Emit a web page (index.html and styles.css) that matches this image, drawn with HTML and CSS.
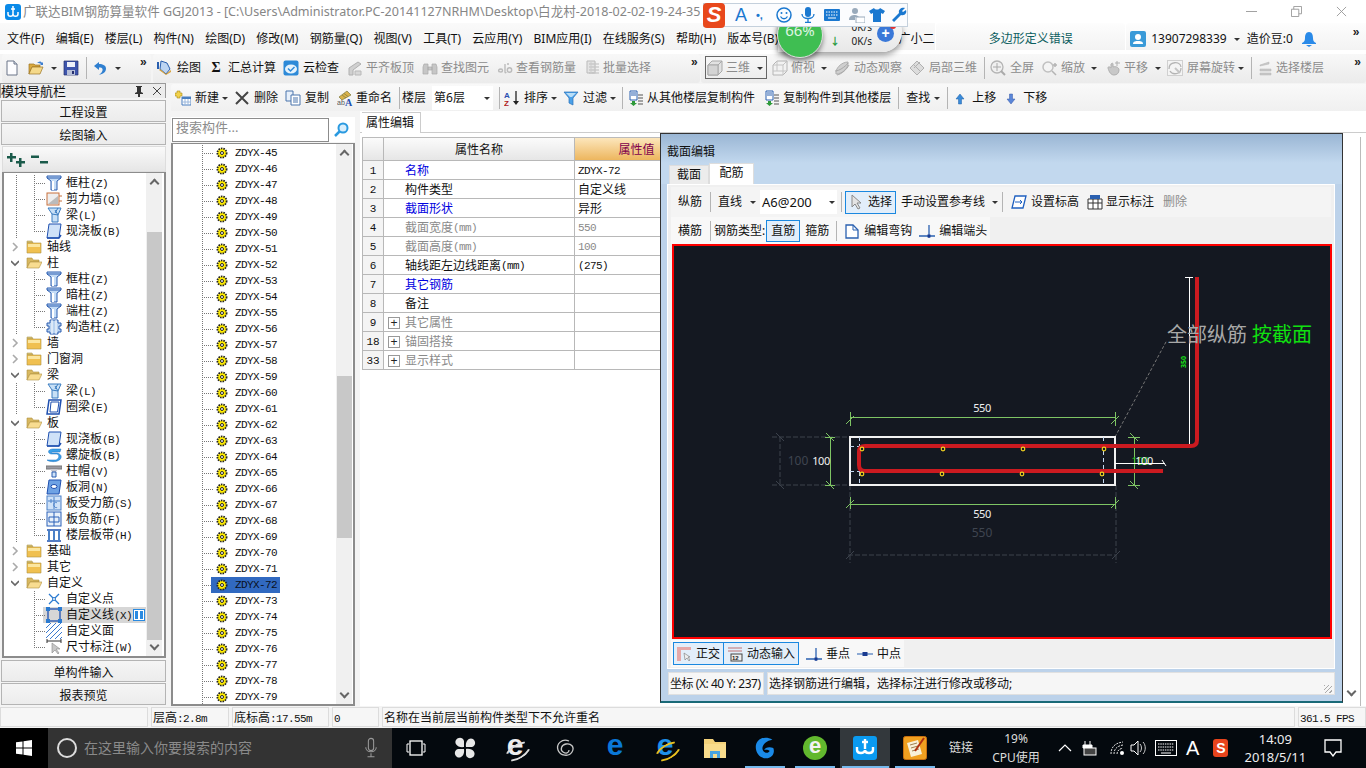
FILE: index.html
```html
<!DOCTYPE html>
<html lang="zh-CN">
<head>
<meta charset="utf-8">
<title>广联达BIM钢筋算量软件 GGJ2013</title>
<link rel="stylesheet" href="styles.css">
</head>
<body>
<svg class="sprite" aria-hidden="true">
<defs>
<symbol id="new" viewBox="0 0 16 16"><path d="M3 1h7l3 3v11H3z" fill="#fdfdff" stroke="#6a7488"/><path d="M10 1v3h3" fill="#d8dfea" stroke="#6a7488"/></symbol>
<symbol id="open" viewBox="0 0 16 16"><path d="M1 14V4h5l1 1h5v2H4l-3 7z" fill="#d9a93f" stroke="#9b7424" stroke-width=".7"/><path d="M1 14l3-7h11l-3 7z" fill="#f5d98a" stroke="#9b7424" stroke-width=".7"/><path d="M9 3c2-2 4-2 5 0l1-1v3h-3l1-1c-1-1-2-1-4-1z" fill="#3d7fd0"/></symbol>
<symbol id="save" viewBox="0 0 16 16"><path d="M1 1h14v14H1z" fill="#3e55ad" stroke="#26306e" stroke-width=".7"/><path d="M4 2h8v5H4z" fill="#eef1fa"/><path d="M4 10h8v5H4z" fill="#b8c0d8"/><path d="M9 11h2v3H9z" fill="#26306e"/></symbol>
<symbol id="undo" viewBox="0 0 16 16"><path d="M7 2 2 6l5 4V7.500c3-.5 4 1 3.500 3-.3 1.500-1.500 3-3.500 4 4 0 7-2.500 7-6 0-3-3-4.500-7-4.500z" fill="#2f7fd0"/></symbol>
<symbol id="draw" viewBox="0 0 16 16"><path d="M4 1l6 2 3 6-4 5-6-5z" fill="#bcd4f2" stroke="#2a5fae"/><path d="M3 9l6 5 5-4v2l-5 3-7-5z" fill="#d8a23c"/><path d="M1 2v7" stroke="#2a5fae" stroke-width="2"/></symbol>
<symbol id="cloud" viewBox="0 0 16 16"><rect x=".5" y=".5" width="15" height="15" rx="2" fill="#2d8ad8"/><ellipse cx="8" cy="9" rx="6" ry="4.500" fill="#e6f3fc"/><path d="M5 8.500l2.500 2.500 4-4" fill="none" stroke="#2d8ad8" stroke-width="1.500"/></symbol>
<symbol id="flush" viewBox="0 0 16 16"><path d="M2 8l9-6 3 2-8 6v5H2z" fill="#d0d0d0" stroke="#b0b0b0"/><path d="M8 11h6v4H8z" fill="#d8d8d8" stroke="#b8b8b8"/></symbol>
<symbol id="bino" viewBox="0 0 16 16"><path d="M2 4h4v10H1V7zM10 4h4l1 3v7h-5zM6 7h4v3H6z" fill="#c6c6c6" stroke="#aaa" stroke-width=".7"/></symbol>
<symbol id="rebar" viewBox="0 0 16 16"><path d="M2 12c-1-2 0-3 2-3s2 3 0 3-2-1-2 0zM8 4v8c0 1 1 1 1 0M12 4l-2 0" fill="none" stroke="#bbb" stroke-width="1.400"/><circle cx="12.500" cy="10" r="2.200" fill="none" stroke="#bbb" stroke-width="1.400"/></symbol>
<symbol id="batch" viewBox="0 0 16 16"><path d="M2 1h8v12H2z" fill="#e4e4e4" stroke="#bbb"/><path d="M4 4h10M4 7h10M4 10h10M4 13h10" stroke="#bbb"/><path d="M6 2v12M10 2v12" stroke="#ccc"/></symbol>
<symbol id="cube" viewBox="0 0 16 16"><path d="M1 5l4-4h10v10l-4 4H1z" fill="#e2e2e2" stroke="#a8a8a8"/><path d="M1 5h10v10M11 5l4-4" fill="none" stroke="#a8a8a8"/><path d="M1 5h10v10H1z" fill="#d4d4d4" stroke="#a8a8a8"/></symbol>
<symbol id="cube2" viewBox="0 0 16 16"><path d="M1 5l4-4h10v10l-4 4H1z" fill="#f2f2f2" stroke="#b4b4b4"/><path d="M1 5h10v10M11 5l4-4M5 1v10H1M5 11l10 0" fill="none" stroke="#c4c4c4"/></symbol>
<symbol id="orbit" viewBox="0 0 16 16"><path d="M2 14C1 9 7 2 14 2c1 5-5 12-12 12z" fill="#cfcfcf" stroke="#b0b0b0"/><path d="M1 11c4 0 10-4 13-8M3 15c5-1 10-6 12-10" fill="none" stroke="#a8a8a8"/></symbol>
<symbol id="local" viewBox="0 0 16 16"><path d="M1 8l7-7 7 7-7 7z" fill="#dcdcdc" stroke="#b0b0b0"/><path d="M4.500 4.500l7 7M8 1l7 7M1 8l7 7M8 5l3-3M5 8l3-3" stroke="#b0b0b0" fill="none"/></symbol>
<symbol id="zoomall" viewBox="0 0 16 16"><circle cx="7" cy="7" r="6" fill="#f0f0f0" stroke="#b4b4b4" stroke-width="1.300"/><path d="M7 3v8M3 7h8" stroke="#aaa"/><path d="M11 11l4 4" stroke="#aaa" stroke-width="2"/></symbol>
<symbol id="zoomin" viewBox="0 0 16 16"><circle cx="6" cy="7" r="5" fill="#f4f4f4" stroke="#c0c0c0" stroke-width="1.500"/><path d="M10 11l4 4M11 5h4M13 3v4" stroke="#b4b4b4" stroke-width="1.500"/></symbol>
<symbol id="pan" viewBox="0 0 16 16"><path d="M3 8c0-2 2-1 3 0V4c1-1 2-1 2 0v3c2-1 6 0 6 3 0 3-2 5-5 5-3 0-5-3-6-7z" fill="#c8c8c8" stroke="#b0b0b0"/><path d="M12 1v5M10 3h5" stroke="#b0b0b0"/></symbol>
<symbol id="rotate" viewBox="0 0 16 16"><rect x=".5" y=".5" width="15" height="15" fill="#f4f4f4" stroke="#d0d0d0"/><path d="M2 9c0-8 11-8 12-2M14 8c0 7-9 7-11 3" fill="none" stroke="#b4b4b4" stroke-width="1.300"/><path d="M8 8l5 5" stroke="#c4c4c4" stroke-width="2"/></symbol>
<symbol id="floors" viewBox="0 0 16 16"><path d="M2 5l9-3v2l-9 2zM2 9h11v2H2zM2 13h11v2H2z" fill="#c8c8c8" stroke="#b4b4b4" stroke-width=".5"/></symbol>
<symbol id="newitem" viewBox="0 0 16 16"><path d="M2 1h3v2h2v3H5v2H2V6H0V3h2z" fill="#f2d24c" stroke="#a88a1c" stroke-width=".6"/><path d="M7 7h9v8H7z" fill="#fff" stroke="#4a7fc0"/><path d="M7 7h9v2H7z" fill="#4a7fc0"/><path d="M10 9v6M13 9v6M7 12h9" stroke="#9cb8dc"/></symbol>
<symbol id="del" viewBox="0 0 16 16"><path d="M2 2l12 12M14 2 2 14" stroke="#444" stroke-width="2"/></symbol>
<symbol id="copy" viewBox="0 0 16 16"><path d="M1 1h7v10H1z" fill="#e8f0fa" stroke="#4a74ac"/><path d="M6 5h9v10H6z" fill="#fff" stroke="#4a74ac"/><path d="M8 8h5M8 10h5M8 12h5" stroke="#4a74ac"/></symbol>
<symbol id="rename" viewBox="0 0 16 16"><path d="M2 7l8-6 4 4-9 5z" fill="#d9b24c" stroke="#7e7a3c" stroke-width=".7"/><path d="M5 5l4 3M7 3.500l4 3" stroke="#7e7a3c" stroke-width=".7"/><text class="svgmini" x="0" y="15">ab</text><text class="svgA" x="8" y="15.500">A</text></symbol>
<symbol id="sort" viewBox="0 0 16 16"><text class="svgaz az1" x="0" y="7.500">A</text><text class="svgaz az2" x="0" y="15.500">Z</text><path d="M12 1v12" stroke="#222" stroke-width="1.300"/><path d="M9 11l3 4 3-4z" fill="#222"/></symbol>
<symbol id="funnel" viewBox="0 0 16 16"><path d="M1 2h14L10 8v7l-4-2V8z" fill="#4aa0e8" stroke="#2a70b8" stroke-width=".7"/><path d="M3 3h10L9 7H7z" fill="#b8def8"/></symbol>
<symbol id="cfrom" viewBox="0 0 16 16"><path d="M2 1h7v9H2z" fill="#fff" stroke="#2a60b0"/><path d="M3 3h5M3 5h5" stroke="#2a60b0"/><path d="M4 11h3v2h2l-3.500 3L2 13h2z" fill="#2e9a3a"/><path d="M10 5h5M10 8h5M10 11h5M10 14h5" stroke="#555" stroke-width="1.200"/></symbol>
<symbol id="up" viewBox="0 0 16 16"><path d="M8 4l4 5h-2.500v5h-3V9H4z" fill="#3a8ad8" stroke="#1f60a8" stroke-width=".5"/></symbol>
<symbol id="down" viewBox="0 0 16 16"><path d="M8 14l4-5H9.500V4h-3v5H4z" fill="#5a86d8" stroke="#3658a8" stroke-width=".5"/></symbol>
<symbol id="tcol" viewBox="0 0 16 16"><path d="M1 1h14v2l-4 3v9H5V6L1 3z" fill="#c4dcf6" stroke="#2a5cb0"/><path d="M1 3h14" stroke="#2a5cb0"/><path d="M7 6v9" stroke="#fff" stroke-width="2"/></symbol>
<symbol id="wall" viewBox="0 0 16 16"><rect x="1" y="2" width="12" height="12" fill="#eee" stroke="#c8703c"/><path d="M2 13l10-8v8z" fill="#bbb"/><path d="M13 5h3M13 10h3" stroke="#c8703c"/></symbol>
<symbol id="beam" viewBox="0 0 16 16"><path d="M2 1h13l-3 7v7H6V7z" fill="#c8e0f6" stroke="#3a7cc0"/><path d="M6 7l6 1M9 3l3 5M12 1l-3 5" stroke="#3a7cc0" fill="none"/></symbol>
<symbol id="slab" viewBox="0 0 16 16"><path d="M3 1h12l-2 14H1z" fill="#cfe2f8" stroke="#1f50b0"/><path d="M1 15h12l2-3" fill="none" stroke="#1f50b0" stroke-width="1.500"/></symbol>
<symbol id="ring" viewBox="0 0 16 16"><path d="M3 1h12l-2 14H1z" fill="#fff" stroke="#1f50b0" stroke-width="1.500"/><path d="M5 3h8l-1.500 10H4z" fill="#fff" stroke="#1f50b0"/></symbol>
<symbol id="cons" viewBox="0 0 16 16"><path d="M4 1h8v3h3v3h-2v3h2v3h-3v2H4v-2H1v-3h2V7H1V4h3z" fill="#b8d2f0" stroke="#2a5cb0"/><path d="M6 1v14M10 1v14" stroke="#fff"/></symbol>
<symbol id="spiral" viewBox="0 0 16 16"><path d="M15 2H7C2 2 1 6 5 7h6c3 1 2 5-1 6H1c2 2 12 3 14-2 1-3-2-5-5-5H6c-1 0-1-1 1-1h7z" fill="#3aa0e8" stroke="#2070c0" stroke-width=".5"/></symbol>
<symbol id="cap" viewBox="0 0 16 16"><path d="M0 3h16v3H0z" fill="#9a9aa2" stroke="#777"/><path d="M4 6h8l-2 3H6z" fill="#c8c8d0"/><path d="M6 9h4v5H6z" fill="#cfe2f8" stroke="#2a5cb0"/></symbol>
<symbol id="hole" viewBox="0 0 16 16"><path d="M3 1h12l-2 14H1z" fill="#6ea2e4" stroke="#1f50b0"/><ellipse cx="8" cy="7.500" rx="3" ry="2" fill="#fff" stroke="#1f50b0"/></symbol>
<symbol id="rebs" viewBox="0 0 16 16"><rect x="1" y="1" width="14" height="14" fill="#cfe2f8" stroke="#4a80c8"/><path d="M8 2v12M2 6h12M5 4v4M11 8c-2-2-4 1-3 3 1 2 3 2 3 1" fill="none" stroke="#4a80c8"/></symbol>
<symbol id="rebn" viewBox="0 0 16 16"><rect x="1" y="1" width="14" height="14" fill="#e8f0fa" stroke="#2a60b8"/><path d="M8 1v14M3 6h10v5H3z" fill="none" stroke="#2a60b8"/></symbol>
<symbol id="band" viewBox="0 0 16 16"><path d="M1 3h14M1 14h14" stroke="#1f50b0" stroke-width="1.500"/><path d="M3 3v11M8 3v11M13 3v11" stroke="#4a80c8" stroke-width="2"/></symbol>
<symbol id="pt" viewBox="0 0 16 16"><path d="M3 3l10 10M13 3 3 13" stroke="#2a7ad0" stroke-width="1.300"/><circle cx="8" cy="8" r="1.500" fill="#fff" stroke="#2a7ad0"/></symbol>
<symbol id="lrect" viewBox="0 0 16 16"><rect x="2" y="2" width="12" height="12" fill="none" stroke="#1f50b0" stroke-width="1.300"/><path d="M0 0h4v4H0zM12 0h4v4h-4zM0 12h4v4H0zM12 12h4v4h-4z" fill="#2a7ad0"/></symbol>
<symbol id="hatch" viewBox="0 0 16 16"><path d="M0 5 5 0M0 10 10 0M0 15 15 0M4 16 16 4M9 16l7-7M14 16l2-2" stroke="#3a7ad0"/></symbol>
<symbol id="dim" viewBox="0 0 16 16"><path d="M1 2h14M1 0v4M15 0v4" stroke="#333"/><path d="M6 4v10l3-3 3 4 1-1-3-4h4z" fill="#c8c8c8" stroke="#888" stroke-width=".6"/></symbol>
<symbol id="cols" viewBox="0 0 12 12"><rect x=".5" y=".5" width="11" height="11" fill="#fff" stroke="#2a8ae0"/><path d="M2 2h3v8H2zM7 2h3v8H7z" fill="#2a8ae0"/></symbol>
<symbol id="fclosed" viewBox="0 0 16 16"><path d="M1 4V2h5l1 2z" fill="#d8c070" stroke="#b09a58" stroke-width=".6"/><path d="M1 4h14v10H1z" fill="#f0c050" stroke="#b09040" stroke-width=".6"/><path d="M2 5h12v3H2z" fill="#fbe6a0"/></symbol>
<symbol id="fopen" viewBox="0 0 16 16"><path d="M1 13V3h5l1 2h6v2H4z" fill="#d8b860" stroke="#b09040" stroke-width=".6"/><path d="M1 13l3-6h12l-3 6z" fill="#f8dc90" stroke="#b09040" stroke-width=".6"/></symbol>
<symbol id="chr" viewBox="0 0 8 10"><path d="M2 1l4 4-4 4" fill="none" stroke="#aaa" stroke-width="1.600"/></symbol>
<symbol id="chd" viewBox="0 0 8 10"><path d="M0 3l4 4 4-4" fill="none" stroke="#666" stroke-width="1.600"/></symbol>
<symbol id="gear" viewBox="0 0 12 12"><circle cx="6" cy="6" r="4.600" fill="#ffec00" stroke="#222" stroke-width="1.800" stroke-dasharray="1.500 1"/><circle cx="6" cy="6" r="1.500" fill="#fff" stroke="#222"/></symbol>
<symbol id="plus2" viewBox="0 0 24 16"><path d="M3 1h2.500v3H9v2.500H5.500V10H3V6.500H0V4h3zM12 6h2.500v3H18v2.500h-3.500V15H12v-3.500H9V9h3z" fill="#1a5a4a"/></symbol>
<symbol id="minus2" viewBox="0 0 24 16"><path d="M0 3.500h8V6H0zM9 9h8v2.500H9z" fill="#1a5a4a"/></symbol>
<symbol id="user" viewBox="0 0 16 16"><rect width="16" height="16" rx="2" fill="#3a9ad8"/><circle cx="8" cy="6" r="3" fill="#fff"/><path d="M3 13c0-3 3-3 5-3s5 0 5 3z" fill="#fff"/></symbol>
<symbol id="bell" viewBox="0 0 16 16"><path d="M8 1c3 0 4 3 4 6s1 4 3 5v1H1v-1c2-1 3-2 3-5s1-6 4-6z" fill="#2a8ae8"/><path d="M5 14h6l-3 2z" fill="#2a8ae8"/></symbol>
<symbol id="cursor" viewBox="0 0 16 16"><path d="M4 1v12l3-3 3 5 2-1-3-5h4z" fill="#e4e4e4" stroke="#888"/></symbol>
<symbol id="elev" viewBox="0 0 16 16"><path d="M4 2h11l-3 12H1z" fill="#fff" stroke="#1f60c0" stroke-width="1.300"/><path d="M4 8h7M11 8l-2-2M11 8l-2 2" stroke="#1f60c0" fill="none"/></symbol>
<symbol id="showdim" viewBox="0 0 16 16"><path d="M1 5h14v10H1z" fill="#fff" stroke="#333"/><path d="M1 9h14M6 5v10M11 5v10" stroke="#333"/><path d="M3 1h10v4H3z" fill="#2a60b0"/></symbol>
<symbol id="hook" viewBox="0 0 16 16"><path d="M2 2h7l5 5v8H2z" fill="#fff" stroke="#2a60b0" stroke-width="1.300"/><path d="M9 2v5h5" fill="none" stroke="#2a60b0"/></symbol>
<symbol id="endp" viewBox="0 0 16 16"><path d="M0 13h16" stroke="#2a60b0" stroke-width="1.500"/><path d="M10 2v13" stroke="#2a60b0" stroke-width="1.300"/><rect x="8.500" y="11.500" width="3" height="3" fill="#1a3a90"/></symbol>
<symbol id="midp" viewBox="0 0 16 16"><path d="M0 8h16" stroke="#6a90c8" stroke-width="1.500"/><rect x="5.500" y="6" width="5" height="4" fill="#1a3a90"/></symbol>
<symbol id="ortho" viewBox="0 0 16 16"><path d="M1 1h14v3H5v11H1z" fill="#e6a8a8"/><path d="M8 7l1 7 2-2 2 3 1-1-2-3h2z" fill="#eee" stroke="#777" stroke-width=".6"/></symbol>
<symbol id="dyn" viewBox="0 0 16 16"><path d="M1 2h14M1 5h14" stroke="#c07070"/><rect x="4" y="8" width="11" height="7" fill="#eee" stroke="#444"/><text class="svgdyn" x="5" y="14">12</text></symbol>
<symbol id="search" viewBox="0 0 16 16"><circle cx="10" cy="6" r="4.500" fill="#d8eefc" stroke="#2a9ae0" stroke-width="2"/><path d="M6.500 9.500 2 14" stroke="#2a9ae0" stroke-width="2.500"/></symbol>
<symbol id="pin" viewBox="0 0 12 12"><path d="M3 1h6v1H8v5l2 1v1H7v3H5V9H2V8l2-1V2H3z" fill="#333"/></symbol>
<symbol id="close" viewBox="0 0 12 12"><path d="M2 2l8 8M10 2l-8 8" stroke="#444"/></symbol>
<symbol id="win" viewBox="0 0 16 16"><path d="M0 2.300 6.500 1.400V7.500H0zM7.500 1.300 16 0V7.500H7.500zM0 8.500H6.500V14.600L0 13.700zM7.500 8.500H16V16L7.500 14.700z" fill="#fff"/></symbol>
<symbol id="mic" viewBox="0 0 16 24"><rect x="5" y="1" width="6" height="14" rx="3" fill="none" stroke="#999" stroke-width="1.200"/><path d="M2 11c0 7 12 7 12 0M8 18v4M4 22h8" fill="none" stroke="#999" stroke-width="1.200"/></symbol>
<symbol id="tview" viewBox="0 0 20 16"><rect x="4" y="1" width="12" height="14" fill="none" stroke="#fff" stroke-width="1.300"/><path d="M3 4H1v8h2M17 4h2v8h-2" fill="none" stroke="#fff"/></symbol>
<symbol id="fan" viewBox="0 0 22 22"><path d="M10 10C3 11 0 6 2 3 4 0 9 0 10 4zM12 10c-1-7 4-10 7-8 3 2 3 7-1 8zM12 12c7-1 10 4 8 7-2 3-7 3-8-1zM10 12c1 7-4 10-7 8-3-2-3-7 1-8z" fill="#e8e8e8"/></symbol>
<symbol id="gspiral" viewBox="0 0 20 20"><path d="M14 3C7 0 1 6 3 12s11 7 14 2-1-9-6-8-6 6-3 8 6 1 6-2" fill="none" stroke="#c8c8c8" stroke-width="1.300"/></symbol>
<symbol id="folder2" viewBox="0 0 24 24"><path d="M1 3h9l2 3h11v16H1z" fill="#f4d27a"/><path d="M1 8h22v14H1z" fill="#f9dc8c"/><path d="M7 15h10v7H7z" fill="#4aa4e0"/><path d="M10 18h4v4h-4z" fill="#f9dc8c"/></symbol>
<symbol id="gapp" viewBox="0 0 24 26"><path d="M20 4C12-1 2 3 2 12c0 8 6 13 13 12 5-1 8-6 6-11-5-2-9 0-10 2 2 0 5 0 6 1-1 3-5 3-7 0-3-5 3-11 10-12z" fill="#1a8ae8"/></symbol>
<symbol id="appblue" viewBox="0 0 24 24"><rect width="24" height="24" rx="3" fill="#0a9af0"/><path d="M12 3v10M4 11v3c0 4 8 4 8 0 0 4 8 4 8 0v-3" fill="none" stroke="#fff" stroke-width="2.400"/><path d="M9 6h6" stroke="#fff" stroke-width="2.400"/></symbol>
<symbol id="note" viewBox="0 0 24 24"><rect x=".5" y=".5" width="23" height="23" rx="2" fill="#f0a020" stroke="#c87010"/><path d="M4 7l11-3 4 14-11 3z" fill="#f8f0d8"/><path d="M7 9l7-2M8 12l7-2M9 15l7-2" stroke="#a08050"/><path d="M21 2 12 15" stroke="#b03010" stroke-width="2"/></symbol>
<symbol id="caret" viewBox="0 0 14 8"><path d="M1 7l6-6 6 6" fill="none" stroke="#fff" stroke-width="1.200"/></symbol>
<symbol id="batt" viewBox="0 0 16 16"><path d="M4 1v4M9 1v4M2 5h9v3H2z" stroke="#fff" fill="#fff"/><rect x="3" y="8" width="12" height="7" fill="#444" stroke="#fff"/></symbol>
<symbol id="wifi" viewBox="0 0 16 16"><path d="M2 14c0-7 4-11 12-12M5 14c0-5 3-8 9-9M8 14c0-3 2-5 6-6" fill="none" stroke="#ddd" stroke-dasharray="2 1"/><circle cx="13" cy="13" r="2" fill="#fff"/></symbol>
<symbol id="spk" viewBox="0 0 16 16"><path d="M1 5h3l4-4v14l-4-4H1z" fill="none" stroke="#fff"/><path d="M10 4c2 2 2 6 0 8M13 2c3 3 3 9 0 12" fill="none" stroke="#ccc"/></symbol>
<symbol id="kbd" viewBox="0 0 22 16"><rect x=".5" y=".5" width="21" height="15" fill="none" stroke="#fff"/><path d="M3 4h16M3 7h16M3 10h16" stroke="#fff" stroke-dasharray="1.500 .8"/><path d="M6 13h10" stroke="#fff"/></symbol>
<symbol id="notif" viewBox="0 0 18 18"><path d="M1 1h16v12h-5l-3 4-3-4H1z" fill="none" stroke="#fff" stroke-width="1.300"/></symbol>
<symbol id="smile" viewBox="0 0 16 16"><circle cx="8" cy="8" r="7" fill="none" stroke="#1a78d0" stroke-width="1.500"/><circle cx="5.500" cy="6" r="1" fill="#1a78d0"/><circle cx="10.500" cy="6" r="1" fill="#1a78d0"/><path d="M4.500 9.500c2 3 5 3 7 0" fill="none" stroke="#1a78d0" stroke-width="1.300"/></symbol>
<symbol id="imic" viewBox="0 0 14 16"><rect x="4" y="0" width="6" height="10" rx="3" fill="#1a78d0"/><path d="M1 7c0 6 12 6 12 0M7 12v3M4 15.500h6" fill="none" stroke="#1a78d0" stroke-width="1.300"/></symbol>
<symbol id="ikb" viewBox="0 0 16 12"><rect width="16" height="12" rx="1" fill="#1a78d0"/><path d="M2 3h12M2 6h12" stroke="#fff" stroke-dasharray="1.500 1"/><path d="M4 9h8" stroke="#fff"/></symbol>
<symbol id="iperson" viewBox="0 0 16 16"><circle cx="6" cy="4" r="3" fill="#9ab"/><path d="M0 13c0-4 3-5 6-5 2 0 3 1 4 2H6v3z" fill="#9ab"/><rect x="7" y="10" width="9" height="6" fill="#fff" stroke="#9ab"/></symbol>
<symbol id="shirt" viewBox="0 0 16 16"><path d="M5 1 0 4l2 3 2-1v9h8V6l2 1 2-3-5-3c-1 2-5 2-6 0z" fill="#1a78d0"/></symbol>
<symbol id="wrench" viewBox="0 0 16 16"><path d="M14 1l-3 3 1 1 3-2c1 3-1 6-5 5l-7 7-2-2 7-7c-1-4 3-6 6-5z" fill="#1a78d0"/></symbol>
<symbol id="logo" viewBox="0 0 16 16"><rect width="16" height="16" rx="3" fill="#0a8ae8"/><path d="M8 2v8M3 8v2c0 3 5 3 5 0 0 3 5 3 5 0V8M6 5h4" fill="none" stroke="#fff" stroke-width="1.500"/></symbol>
</defs>
</svg>

<header class="title">
  <svg class="ic logo"><use href="#logo"/></svg>
  <span class="title-text">广联达BIM钢筋算量软件 GGJ2013 - [C:\Users\Administrator.PC-20141127NRHM\Desktop\白龙村-2018-02-02-19-24-35</span>
  <div class="winbtns">
    <svg class="wb" viewBox="0 0 12 12"><path d="M0 6h12" stroke="#999"/></svg>
    <svg class="wb" viewBox="0 0 12 12"><path d="M.5 3.500h8v8h-8zM3 3.500V.5h8.500v8H8.500" fill="none" stroke="#999"/></svg>
    <svg class="wb" viewBox="0 0 12 12"><path d="M1 1l10 10M11 1 1 11" stroke="#999"/></svg>
  </div>
</header>

<nav class="menubar">
  <div class="menu-main">
    <span>文件(F)</span><span>编辑(E)</span><span>楼层(L)</span><span>构件(N)</span><span>绘图(D)</span><span>修改(M)</span><span>钢筋量(Q)</span><span>视图(V)</span><span>工具(T)</span><span>云应用(Y)</span><span>BIM应用(I)</span><span>在线服务(S)</span><span>帮助(H)</span><span>版本号(B)</span><span class="xiaoer">广小二</span>
  </div>
  <div class="menu-err">多边形定义错误</div>
  <div class="menu-user tb">
    <svg class="ic"><use href="#user"/></svg>
    <span class="m5 phone">13907298339</span>
    <i class="dd m7"></i>
    <span class="m8">造价豆:0</span>
    <svg class="ic m8"><use href="#bell"/></svg>
    <b class="more m36">»</b>
  </div>
</nav>

<div class="toolbar1">
  <div class="seg seg1 tb">
    <svg class="ic m2"><use href="#new"/></svg>
    <svg class="ic m8"><use href="#open"/></svg>
    <i class="dd m7"></i>
    <svg class="ic m7"><use href="#save"/></svg>
    <i class="sp m7"></i>
    <svg class="ic m5"><use href="#undo"/></svg>
    <i class="dd m7"></i>
    <b class="more m20">»</b>
  </div>
  <div class="seg seg2 tb">
    <svg class="ic m4"><use href="#draw"/></svg><span class="m4">绘图</span>
    <b class="sigma m7">Σ</b><span class="m4">汇总计算</span>
    <svg class="ic m7"><use href="#cloud"/></svg><span class="m4">云检查</span>
    <svg class="ic m8"><use href="#flush"/></svg><span class="m3 off">平齐板顶</span>
    <svg class="ic m8"><use href="#bino"/></svg><span class="m3 off">查找图元</span>
    <svg class="ic m8"><use href="#rebar"/></svg><span class="m3 off">查看钢筋量</span>
    <svg class="ic m9"><use href="#batch"/></svg><span class="m2 off">批量选择</span>
    <b class="more m40">»</b>
  </div>
  <div class="seg seg3 tb">
    <div class="box3d m4 tb"><svg class="ic m2"><use href="#cube"/></svg><span class="m3 off">三维</span><i class="dd m7"></i></div>
    <svg class="ic m5"><use href="#cube2"/></svg><span class="m3 off">俯视</span><i class="dd m6"></i>
    <svg class="ic m8"><use href="#orbit"/></svg><span class="m4 off">动态观察</span>
    <svg class="ic m7"><use href="#local"/></svg><span class="m4 off">局部三维</span>
    <i class="sp m7"></i>
    <svg class="ic m5"><use href="#zoomall"/></svg><span class="m4 off">全屏</span>
    <svg class="ic m8"><use href="#zoomin"/></svg><span class="m3 off">缩放</span><i class="dd m6"></i>
    <svg class="ic m9"><use href="#pan"/></svg><span class="m3 off">平移</span><i class="dd m7"></i>
    <svg class="ic m7"><use href="#rotate"/></svg><span class="m4 off">屏幕旋转</span><i class="dd m3"></i>
    <i class="sp m8"></i>
    <svg class="ic m6"><use href="#floors"/></svg><span class="m2 off">选择楼层</span>
    <b class="more m30">»</b>
  </div>
</div>

<main class="main">
  <aside class="left">
    <div class="nav-head"><span>模块导航栏</span><svg class="nav-ic pinic"><use href="#pin"/></svg><svg class="nav-ic m6"><use href="#close"/></svg></div>
    <div class="lbtn lbtn1">工程设置</div>
    <div class="lbtn">绘图输入</div>
    <div class="expand"><svg class="expic"><use href="#plus2"/></svg><svg class="expic"><use href="#minus2"/></svg></div>
    <div class="ltree">
      <div class="lrows">
        <div class="row ch rl"><svg class="ic tic"><use href="#tcol"/></svg><span class="m4">框柱<span class="m">(Z)</span></span></div>
        <div class="row ch rl"><svg class="ic tic"><use href="#wall"/></svg><span class="m4">剪力墙<span class="m">(Q)</span></span></div>
        <div class="row ch rl"><svg class="ic tic"><use href="#beam"/></svg><span class="m4">梁<span class="m">(L)</span></span></div>
        <div class="row ch rl last"><svg class="ic tic"><use href="#slab"/></svg><span class="m4">现浇板<span class="m">(B)</span></span></div>
        <div class="row gr"><svg class="chev"><use href="#chr"/></svg><svg class="ic m7"><use href="#fclosed"/></svg><span class="m5">轴线</span></div>
        <div class="row gr"><svg class="chev"><use href="#chd"/></svg><svg class="ic m7"><use href="#fopen"/></svg><span class="m5">柱</span></div>
        <div class="row ch rl"><svg class="ic tic"><use href="#tcol"/></svg><span class="m4">框柱<span class="m">(Z)</span></span></div>
        <div class="row ch rl"><svg class="ic tic"><use href="#tcol"/></svg><span class="m4">暗柱<span class="m">(Z)</span></span></div>
        <div class="row ch rl"><svg class="ic tic"><use href="#tcol"/></svg><span class="m4">端柱<span class="m">(Z)</span></span></div>
        <div class="row ch rl last"><svg class="ic tic"><use href="#cons"/></svg><span class="m4">构造柱<span class="m">(Z)</span></span></div>
        <div class="row gr"><svg class="chev"><use href="#chr"/></svg><svg class="ic m7"><use href="#fclosed"/></svg><span class="m5">墙</span></div>
        <div class="row gr"><svg class="chev"><use href="#chr"/></svg><svg class="ic m7"><use href="#fclosed"/></svg><span class="m5">门窗洞</span></div>
        <div class="row gr"><svg class="chev"><use href="#chd"/></svg><svg class="ic m7"><use href="#fopen"/></svg><span class="m5">梁</span></div>
        <div class="row ch rl"><svg class="ic tic"><use href="#beam"/></svg><span class="m4">梁<span class="m">(L)</span></span></div>
        <div class="row ch rl last"><svg class="ic tic"><use href="#ring"/></svg><span class="m4">圈梁<span class="m">(E)</span></span></div>
        <div class="row gr"><svg class="chev"><use href="#chd"/></svg><svg class="ic m7"><use href="#fopen"/></svg><span class="m5">板</span></div>
        <div class="row ch rl"><svg class="ic tic"><use href="#slab"/></svg><span class="m4">现浇板<span class="m">(B)</span></span></div>
        <div class="row ch rl"><svg class="ic tic"><use href="#spiral"/></svg><span class="m4">螺旋板<span class="m">(B)</span></span></div>
        <div class="row ch rl"><svg class="ic tic"><use href="#cap"/></svg><span class="m4">柱帽<span class="m">(V)</span></span></div>
        <div class="row ch rl"><svg class="ic tic"><use href="#hole"/></svg><span class="m4">板洞<span class="m">(N)</span></span></div>
        <div class="row ch rl"><svg class="ic tic"><use href="#rebs"/></svg><span class="m4">板受力筋<span class="m">(S)</span></span></div>
        <div class="row ch rl"><svg class="ic tic"><use href="#rebn"/></svg><span class="m4">板负筋<span class="m">(F)</span></span></div>
        <div class="row ch rl last"><svg class="ic tic"><use href="#band"/></svg><span class="m4">楼层板带<span class="m">(H)</span></span></div>
        <div class="row gr"><svg class="chev"><use href="#chr"/></svg><svg class="ic m7"><use href="#fclosed"/></svg><span class="m5">基础</span></div>
        <div class="row gr"><svg class="chev"><use href="#chr"/></svg><svg class="ic m7"><use href="#fclosed"/></svg><span class="m5">其它</span></div>
        <div class="row gr"><svg class="chev"><use href="#chd"/></svg><svg class="ic m7"><use href="#fopen"/></svg><span class="m5">自定义</span></div>
        <div class="row ch"><svg class="ic tic"><use href="#pt"/></svg><span class="m4">自定义点</span></div>
        <div class="row ch selrow"><svg class="ic tic"><use href="#lrect"/></svg><span class="m4">自定义线<span class="m">(X)</span></span><svg class="colic"><use href="#cols"/></svg></div>
        <div class="row ch"><svg class="ic tic"><use href="#hatch"/></svg><span class="m4">自定义面</span></div>
        <div class="row ch last"><svg class="ic tic"><use href="#dim"/></svg><span class="m4">尺寸标注<span class="m">(W)</span></span></div>
      </div>
      <div class="sbar sbar-l"><i class="up-ch"></i><i class="thumb-l"></i><i class="dn-ch"></i></div>
    </div>
    <div class="lbtn lbtn3">单构件输入</div>
    <div class="lbtn">报表预览</div>
  </aside>

  <section class="work">
    <div class="toolbar3 tb">
      <svg class="ic m4"><use href="#newitem"/></svg><span class="m4">新建</span><i class="dd m3"></i>
      <svg class="ic m7"><use href="#del"/></svg><span class="m4">删除</span>
      <svg class="ic m7"><use href="#copy"/></svg><span class="m4">复制</span>
      <svg class="ic m8"><use href="#rename"/></svg><span class="m3">重命名</span>
      <i class="sp m7"></i><span class="m2">楼层</span>
      <div class="combo m6"><span>第6层</span><i class="dd"></i></div>
      <i class="sp m6"></i>
      <svg class="ic m4"><use href="#sort"/></svg><span class="m4">排序</span><i class="dd m3"></i>
      <svg class="ic m7"><use href="#funnel"/></svg><span class="m4">过滤</span><i class="dd m3"></i>
      <i class="sp m7"></i>
      <svg class="ic m5"><use href="#cfrom"/></svg><span class="m3">从其他楼层复制构件</span>
      <svg class="ic m9"><use href="#cfrom"/></svg><span class="m3">复制构件到其他楼层</span>
      <i class="sp m7"></i><span class="m7">查找</span><i class="dd m4"></i>
      <i class="sp m8"></i>
      <svg class="ic m4"><use href="#up"/></svg><span class="m4">上移</span>
      <svg class="ic m7"><use href="#down"/></svg><span class="m4">下移</span>
    </div>
    <div class="work-body">
      <div class="mid">
        <div class="searchrow"><div class="searchbox">搜索构件...</div><svg class="ic m4 sic"><use href="#search"/></svg></div>
        <div class="rtree">
          <div class="rrows">
            <div class="r2"><span class="lab"><svg class="gear"><use href="#gear"/></svg>ZDYX-45</span></div>
            <div class="r2"><span class="lab"><svg class="gear"><use href="#gear"/></svg>ZDYX-46</span></div>
            <div class="r2"><span class="lab"><svg class="gear"><use href="#gear"/></svg>ZDYX-47</span></div>
            <div class="r2"><span class="lab"><svg class="gear"><use href="#gear"/></svg>ZDYX-48</span></div>
            <div class="r2"><span class="lab"><svg class="gear"><use href="#gear"/></svg>ZDYX-49</span></div>
            <div class="r2"><span class="lab"><svg class="gear"><use href="#gear"/></svg>ZDYX-50</span></div>
            <div class="r2"><span class="lab"><svg class="gear"><use href="#gear"/></svg>ZDYX-51</span></div>
            <div class="r2"><span class="lab"><svg class="gear"><use href="#gear"/></svg>ZDYX-52</span></div>
            <div class="r2"><span class="lab"><svg class="gear"><use href="#gear"/></svg>ZDYX-53</span></div>
            <div class="r2"><span class="lab"><svg class="gear"><use href="#gear"/></svg>ZDYX-54</span></div>
            <div class="r2"><span class="lab"><svg class="gear"><use href="#gear"/></svg>ZDYX-55</span></div>
            <div class="r2"><span class="lab"><svg class="gear"><use href="#gear"/></svg>ZDYX-56</span></div>
            <div class="r2"><span class="lab"><svg class="gear"><use href="#gear"/></svg>ZDYX-57</span></div>
            <div class="r2"><span class="lab"><svg class="gear"><use href="#gear"/></svg>ZDYX-58</span></div>
            <div class="r2"><span class="lab"><svg class="gear"><use href="#gear"/></svg>ZDYX-59</span></div>
            <div class="r2"><span class="lab"><svg class="gear"><use href="#gear"/></svg>ZDYX-60</span></div>
            <div class="r2"><span class="lab"><svg class="gear"><use href="#gear"/></svg>ZDYX-61</span></div>
            <div class="r2"><span class="lab"><svg class="gear"><use href="#gear"/></svg>ZDYX-62</span></div>
            <div class="r2"><span class="lab"><svg class="gear"><use href="#gear"/></svg>ZDYX-63</span></div>
            <div class="r2"><span class="lab"><svg class="gear"><use href="#gear"/></svg>ZDYX-64</span></div>
            <div class="r2"><span class="lab"><svg class="gear"><use href="#gear"/></svg>ZDYX-65</span></div>
            <div class="r2"><span class="lab"><svg class="gear"><use href="#gear"/></svg>ZDYX-66</span></div>
            <div class="r2"><span class="lab"><svg class="gear"><use href="#gear"/></svg>ZDYX-67</span></div>
            <div class="r2"><span class="lab"><svg class="gear"><use href="#gear"/></svg>ZDYX-68</span></div>
            <div class="r2"><span class="lab"><svg class="gear"><use href="#gear"/></svg>ZDYX-69</span></div>
            <div class="r2"><span class="lab"><svg class="gear"><use href="#gear"/></svg>ZDYX-70</span></div>
            <div class="r2"><span class="lab"><svg class="gear"><use href="#gear"/></svg>ZDYX-71</span></div>
            <div class="r2"><span class="lab picked"><svg class="gear"><use href="#gear"/></svg>ZDYX-72</span></div>
            <div class="r2"><span class="lab"><svg class="gear"><use href="#gear"/></svg>ZDYX-73</span></div>
            <div class="r2"><span class="lab"><svg class="gear"><use href="#gear"/></svg>ZDYX-74</span></div>
            <div class="r2"><span class="lab"><svg class="gear"><use href="#gear"/></svg>ZDYX-75</span></div>
            <div class="r2"><span class="lab"><svg class="gear"><use href="#gear"/></svg>ZDYX-76</span></div>
            <div class="r2"><span class="lab"><svg class="gear"><use href="#gear"/></svg>ZDYX-77</span></div>
            <div class="r2"><span class="lab"><svg class="gear"><use href="#gear"/></svg>ZDYX-78</span></div>
            <div class="r2"><span class="lab"><svg class="gear"><use href="#gear"/></svg>ZDYX-79</span></div>
          </div>
          <div class="sbar sbar-r"><i class="up-ch"></i><i class="thumb-r"></i><i class="dn-ch"></i></div>
        </div>
      </div>
      <div class="right">
        <div class="tabrow"><div class="tab-attr">属性编辑</div></div>
        <div class="right-body">
          <div class="grid">
            <div class="c-no hd"></div><div class="c-name hd hn">属性名称</div><div class="c-val hd hv">属性值</div>
            <div class="c-no">1</div><div class="c-name blue">名称</div><div class="c-val mono">ZDYX-72</div>
            <div class="c-no">2</div><div class="c-name">构件类型</div><div class="c-val">自定义线</div>
            <div class="c-no">3</div><div class="c-name blue">截面形状</div><div class="c-val">异形</div>
            <div class="c-no">4</div><div class="c-name gray">截面宽度<span class="m">(mm)</span></div><div class="c-val mono gray">550</div>
            <div class="c-no">5</div><div class="c-name gray">截面高度<span class="m">(mm)</span></div><div class="c-val mono gray">100</div>
            <div class="c-no">6</div><div class="c-name">轴线距左边线距离<span class="m">(mm)</span></div><div class="c-val mono">(275)</div>
            <div class="c-no">7</div><div class="c-name blue">其它钢筋</div><div class="c-val"></div>
            <div class="c-no">8</div><div class="c-name">备注</div><div class="c-val"></div>
            <div class="c-no">9</div><div class="c-name gray grp"><i class="plus">+</i>其它属性</div><div class="c-val"></div>
            <div class="c-no">18</div><div class="c-name gray grp"><i class="plus">+</i>锚固搭接</div><div class="c-val"></div>
            <div class="c-no">33</div><div class="c-name gray grp"><i class="plus">+</i>显示样式</div><div class="c-val"></div>
          </div>
          <div class="rscroll"><i class="dn-ch"></i></div>
        </div>
      </div>
    </div>
  </section>
</main>

<footer class="status">
  <div class="st st0"></div>
  <div class="st st1">层高<span class="m">:2.8m</span></div>
  <div class="st st2">底标高<span class="m">:17.55m</span></div>
  <div class="st st3"><span class="m">0</span></div>
  <div class="st st4">名称在当前层当前构件类型下不允许重名</div>
  <div class="st st5"><span class="m">361.5 FPS</span></div>
</footer>

<div class="taskbar">
  <div class="start"><svg class="win"><use href="#win"/></svg></div>
  <div class="tsearch"><i class="ring"></i><span>在这里输入你要搜索的内容</span><svg class="tmic"><use href="#mic"/></svg></div>
  <div class="ti ti0"><svg class="tv"><use href="#tview"/></svg></div>
  <div class="ti"><svg class="t22"><use href="#fan"/></svg></div>
  <div class="ti"><b class="e e-w">e</b></div>
  <div class="ti"><svg class="t20"><use href="#gspiral"/></svg></div>
  <div class="ti"><b class="e e-b">e</b></div>
  <div class="ti"><b class="e e-ie">e</b></div>
  <div class="ti"><svg class="t24"><use href="#folder2"/></svg></div>
  <div class="ti run"><svg class="t24"><use href="#gapp"/></svg></div>
  <div class="ti run"><b class="e e-g">e</b></div>
  <div class="ti run act"><svg class="t24"><use href="#appblue"/></svg></div>
  <div class="ti run"><svg class="t24"><use href="#note"/></svg></div>
  <div class="tray">
    <span class="link">链接</span>
    <div class="cpu"><span>19%</span><span>CPU使用</span></div>
    <svg class="car"><use href="#caret"/></svg>
    <svg class="ic m9"><use href="#batt"/></svg>
    <svg class="ic m12"><use href="#wifi"/></svg>
    <svg class="ic m5"><use href="#spk"/></svg>
    <svg class="kb m9"><use href="#kbd"/></svg>
    <b class="bigA m9">A</b>
    <b class="sred">S</b>
    <div class="clock"><span>14:09</span><span>2018/5/11</span></div>
    <svg class="nt"><use href="#notif"/></svg>
  </div>
</div>

<!-- floating network widget -->
<div class="widget">
  <div class="gball">66%</div>
  <div class="net"><span>0K/s</span><span class="netrow"><i class="gdown">↓</i>0K/s</span></div>
  <div class="plusball">+<i class="rdot"></i></div>
</div>

<!-- floating IME bar -->
<div class="ime">
  <b class="slogo">S</b>
  <b class="ia">A</b>
  <b class="ipunct">•,</b>
  <svg class="i16 smi"><use href="#smile"/></svg>
  <svg class="i16 m8"><use href="#imic"/></svg>
  <svg class="i16 m8"><use href="#ikb"/></svg>
  <svg class="i16 m9"><use href="#iperson"/></svg>
  <svg class="i16 m4"><use href="#shirt"/></svg>
  <svg class="i16 m6"><use href="#wrench"/></svg>
</div>

<!-- section editor window -->
<div class="dialog">
  <div class="dlg-title">截面编辑</div>
  <div class="dlg-tabs"><div class="dt dt-a">截面</div><div class="dt dt-b">配筋</div></div>
  <div class="dlg-panel">
    <div class="d-row1 tb">
      <span class="m7">纵筋</span><i class="sp m8"></i><span class="m7">直线</span><i class="dd m8"></i>
      <div class="d-combo m5"><span>A6@200</span><i class="dd"></i></div>
      <i class="sp m4"></i>
      <div class="bluebtn bsel m3"><svg class="ic"><use href="#cursor"/></svg><span class="m4">选择</span></div>
      <span class="m5">手动设置参考线</span><i class="dd m7"></i>
      <i class="sp m5"></i>
      <svg class="ic m8"><use href="#elev"/></svg><span class="m4">设置标高</span>
      <svg class="ic m8"><use href="#showdim"/></svg><span class="m3">显示标注</span>
      <span class="m9 off">删除</span>
    </div>
    <div class="d-row2 tb">
      <span class="m7">横筋</span><i class="sp m8"></i><span class="m3">钢筋类型:</span>
      <div class="bluebtn bstr m1"><span>直筋</span></div>
      <span class="m5">箍筋</span><i class="sp m7"></i>
      <svg class="ic m7"><use href="#hook"/></svg><span class="m4">编辑弯钩</span>
      <svg class="ic m7"><use href="#endp"/></svg><span class="m4">编辑端头</span>
    </div>
    <div class="canvas">
      <svg class="draw" viewBox="674 246 656 391">
        <!-- dark reference dims -->
        <g class="dk">
          <path d="M772 437h78M772 485h78M780 437v48M850 485v78M1116 485v78M848 555h268" stroke-dasharray="5 2"/>
          <path d="M776 433l8 8M776 481l8 8M846 559l8-8M1112 559l8-8"/>
        </g>
        <text class="t-dk" x="798" y="465" text-anchor="middle">100</text>
        <text class="t-dk" x="982" y="537" text-anchor="middle">550</text>
        <!-- leader -->
        <path class="lead" d="M1115 437 1167 340"/>
        <!-- green dims -->
        <g class="gn">
          <path d="M850 417.500h265M850.500 412v14M1115.500 412v14M846 424l8-8M1111 424l8-8"/>
          <path d="M850 504.500h265M850.500 497v12M1115.500 497v12M846 508l8-8M1111 508l8-8"/>
          <path d="M830.500 437v48M825 437.500h10M825 485.500h10M826 433l8 8M826 481l8 8"/>
          <path d="M1134.500 437v48M1128 437.500h12M1128 485.500h12M1130 433l8 8M1130 481l8 8"/>
        </g>
        <text class="t-w" x="982" y="412" text-anchor="middle">550</text>
        <text class="t-w" x="982" y="518" text-anchor="middle">550</text>
        <text class="t-w" x="821" y="465" text-anchor="middle">100</text>
        <text class="t-gn" x="1140" y="465" text-anchor="middle">100</text>
        <text class="t-w" x="1144" y="465" text-anchor="middle">100</text>
        <!-- section outline -->
        <rect class="outline" x="850" y="437" width="265" height="48"/>
        <!-- light dashes -->
        <path class="lt" d="M859.500 437v48M1103.500 437v48M850 446.500h10M850 471.500h10"/>
        <!-- white dim 350 and arrow -->
        <path class="wh" d="M1189.500 277v169M1185 277.500h8M1185 446.500h8M1115 463.500h50M1162 460l4 6"/>
        <text class="t-350" transform="translate(1186 362) rotate(-90)" text-anchor="middle">350</text>
        <!-- rebar -->
        <path class="bar" d="M1163 471H865q-6 0-6-6v-13q0-6 6-6h326q6 0 6-6V277"/>
        <!-- dots -->
        <g class="dots">
          <circle cx="862" cy="449" r="1.800"/><circle cx="943" cy="449" r="1.800"/><circle cx="1023" cy="449" r="1.800"/><circle cx="1104" cy="449" r="1.800"/>
          <circle cx="862" cy="474" r="1.800"/><circle cx="942" cy="474" r="1.800"/><circle cx="1022" cy="474" r="1.800"/><circle cx="1102" cy="474" r="1.800"/>
        </g>
        <text class="t-big" x="1167" y="342">全部纵筋</text>
        <text class="t-big t-bg" x="1252" y="342">按截面</text>
      </svg>
    </div>
    <div class="d-bottom tb">
      <div class="bluebtn b-or"><svg class="ic"><use href="#ortho"/></svg><span class="m4">正交</span></div>
      <div class="bluebtn b-dy"><svg class="ic"><use href="#dyn"/></svg><span class="m4">动态输入</span></div>
      <svg class="ic m7"><use href="#endp"/></svg><span class="m4">垂点</span>
      <svg class="ic m7"><use href="#midp"/></svg><span class="m4">中点</span>
    </div>
  </div>
  <div class="dlg-status">
    <div class="ds ds1">坐标 (X: 40 Y: 237)</div>
    <div class="ds ds2">选择钢筋进行编辑，选择标注进行修改或移动;<i class="grip"></i></div>
  </div>
</div>
</body>
</html>
```
FILE: styles.css
```css
* { box-sizing: border-box; }
html, body { margin: 0; padding: 0; }
body {
  width: 1366px; height: 768px; overflow: hidden; position: relative;
  display: flex; flex-direction: column;
  background: #f4f4f4; color: #111;
  font: 12px/16px "Noto Sans", "Noto Sans CJK SC", sans-serif;
}
i { font-style: normal; display: block; }
.sprite { position: absolute; width: 0; height: 0; }
.ic { width: 16px; height: 16px; flex: none; }
.tb { display: flex; align-items: center; white-space: nowrap; }
.tb > * { flex: none; }
.m1 { margin-left: 1px; } .m2 { margin-left: 2px; } .m3 { margin-left: 3px; } .m4 { margin-left: 4px; }
.m5 { margin-left: 5px; } .m6 { margin-left: 6px; } .m7 { margin-left: 7px; } .m8 { margin-left: 8px; }
.m9 { margin-left: 9px; } .m10 { margin-left: 10px; } .m12 { margin-left: 12px; } .m20 { margin-left: 20px; }
.m30 { margin-left: 30px; } .m36 { margin-left: 36px; } .m40 { margin-left: 40px; }
.dd { width: 6px; height: 3px; border-left: 3px solid transparent; border-right: 3px solid transparent; border-top: 3px solid #333; margin-top: 1px; margin-right: -1px; }
.sp { width: 1px; height: 22px; background: #b4b4b4; }
.more { width: 8px; font: bold 12px/10px "Liberation Sans", sans-serif; color: #222; align-self: flex-start; margin-top: 3px; }
.off { color: #8c8c8c; }
.m { font: 10px/16px "Liberation Mono", monospace; }
span.m { font-size: 11px; letter-spacing: -.6px; }

/* title */
.title { height: 23px; flex: none; display: flex; align-items: center; background: #fff; white-space: nowrap; overflow: hidden; }
.logo { margin-left: 5px; }
.title-text { margin-left: 2px; color: #868686; font-size: 12.55px; }
.winbtns { margin-left: auto; display: flex; gap: 34px; margin-right: 19px; }
.wb { width: 11px; height: 11px; flex: none; }

/* menubar */
.menubar { height: 31px; flex: none; display: flex; background: #fff; white-space: nowrap; }
.menu-main { width: 936px; height: 27px; display: flex; gap: 11.25px; align-items: center; padding: 5px 0 0 7px; background: linear-gradient(#fafafa, #f2f2f2); overflow: hidden; }
.xiaoer { margin-left: 109px; }
.menu-err { width: 189px; height: 27px; margin-left: 1px; border-radius: 3px 3px 0 0; background: linear-gradient(#fdfdfd, #f3f3f3); color: #0c5e60; font-size: 12px; display: flex; align-items: center; justify-content: center; padding-top: 5px; }
.menu-user { width: 240px; height: 27px; margin-left: 1px; padding: 5px 0 0 4px; border-radius: 3px 0 0 0; background: linear-gradient(#fdfdfd, #f3f3f3); }
.menu-user .more { margin-top: -1px; }

/* toolbar1 */
.toolbar1 { height: 30px; flex: none; display: flex; background: #f4f4f4; }
.seg { height: 29px; padding-bottom: 2px; background: linear-gradient(#f8f8f8, #ebebeb); border-radius: 3px; }
.seg1 { margin-left: 2px; width: 149px; }
.seg2 { margin-left: 2px; width: 547px; }
.seg3 { margin-left: 1px; width: 665px; }
.sigma { width: 16px; text-align: center; font: bold 14px/16px "Liberation Serif", serif; }
.box3d { width: 62px; height: 23px; border: 1px solid #666; }
.box3d .ic { margin-left: 1px; }

/* main */
.main { height: 622px; flex: none; display: flex; }
.left { width: 166px; flex: none; display: flex; flex-direction: column; }
.nav-head { height: 15px; margin-top: -1px; background: #ececec; border: 1px solid #9a9a9a; border-bottom: 0; font-size: 13px; line-height: 14px; display: flex; align-items: center; white-space: nowrap; }
.nav-ic { width: 12px; height: 12px; flex: none; }
.pinic { margin-left: 67px; }
.lbtn { height: 22px; margin: 1px 0 0 1px; background: linear-gradient(#f5f5f5, #ececec); border: 1px solid #b4b4b4; text-align: center; line-height: 23px; }
.lbtn1 { margin-top: 2px; }
.lbtn3 { margin-top: 2px; }
.expand { height: 26px; margin: 1px 0 0 2px; padding: 2px 0 0 4px; background: linear-gradient(#fafafa, #e6e6e6); display: flex; align-items: center; border: 1px solid #ddd; }
.expic { width: 24px; height: 16px; flex: none; }
.ltree { height: 486px; margin-left: 2px; border: 2px solid #8c8c8c; border-top: 1px solid #8c8c8c; background: #fff; display: flex; overflow: hidden; }
.lrows { width: 142px; flex: none; padding-top: 2px; }
.row { height: 16px; display: flex; align-items: center; white-space: nowrap; --v: repeating-linear-gradient(to bottom, #777 0 1px, transparent 1px 2px); --h: repeating-linear-gradient(to right, #777 0 1px, transparent 1px 2px); }
.gr { padding-left: 7px; }
.ch { padding-left: 42px; background-repeat: repeat-y, no-repeat; background-image: var(--v), var(--h); background-size: 1px 2px, 12px 1px; background-position: 30px 0, 30px 8px; }
.chev { width: 8px; height: 10px; flex: none; }
.ch.last { background-image: repeating-linear-gradient(to bottom, #777 0 1px, transparent 1px 2px), var(--h); background-size: 1px 8px, 12px 1px; background-repeat: no-repeat; }
.rl { background-image: var(--v), var(--h), var(--v); background-size: 1px 2px, 12px 1px, 1px 2px; background-position: 30px 0, 30px 8px, 12px 0; background-repeat: repeat-y, no-repeat, repeat-y; }
.rl.last { background-image: repeating-linear-gradient(to bottom, #777 0 1px, transparent 1px 2px), var(--h), var(--v); background-size: 1px 8px, 12px 1px, 1px 2px; background-position: 30px 0, 30px 8px, 12px 0; background-repeat: no-repeat, no-repeat, repeat-y; }
.selrow { background-image: var(--v), var(--h), linear-gradient(#d6d6d6, #d6d6d6); background-size: 1px 2px, 12px 1px, 100% 100%; background-position: 30px 0, 30px 8px, 39px 0; background-repeat: repeat-y, no-repeat, no-repeat; }
.colic { width: 12px; height: 12px; flex: none; margin-left: 1px; }
.sbar { width: 16px; flex: none; background: #f0f0f0; display: flex; flex-direction: column; align-items: center; }
.up-ch, .dn-ch { width: 7px; height: 7px; border: solid #666; border-width: 2px 0 0 2px; transform: rotate(45deg); flex: none; }
.dn-ch { transform: rotate(225deg); }
.sbar .up-ch { margin-top: 7px; }
.sbar .dn-ch { margin-top: auto; margin-bottom: 7px; }
.thumb-l { width: 15px; height: 408px; margin-top: 45px; background: #c8c8c8; flex: none; }
.thumb-r { width: 15px; height: 162px; margin-top: 218px; background: #c8c8c8; flex: none; }

/* work */
.work { flex: 1; min-width: 0; margin-left: 5px; display: flex; flex-direction: column; }
.toolbar3 { height: 27px; flex: none; background: linear-gradient(#f9f9f9, #f0f0f0); border-radius: 3px 0 0 0; }
.combo { width: 61px; height: 24px; background: #fff; display: flex; align-items: center; padding: 0 4px 0 2px; justify-content: space-between; }
.work-body { flex: 1; display: flex; min-height: 0; }
.mid { width: 184px; flex: none; display: flex; flex-direction: column; }
.searchrow { height: 25px; margin-top: 6px; display: flex; align-items: center; padding-left: 1px; background: #fff; flex: none; }
.searchbox { width: 157px; height: 24px; border: 1px solid #8c8c8c; color: #8c8c8c; font-size: 13px; line-height: 17px; padding-left: 3px; background: #fff; }
.sic { margin-left: 4px; }
.rtree { flex: 1; margin-top: 1px; border: 2px solid #8c8c8c; border-top: 1px solid #8c8c8c; background: #fff; display: flex; overflow: hidden; min-height: 0; }
.rrows { width: 163px; flex: none; padding-top: 1px; }
.r2 { height: 16px; padding-left: 38px; --v: repeating-linear-gradient(to bottom, #777 0 1px, transparent 1px 2px); --h: repeating-linear-gradient(to right, #777 0 1px, transparent 1px 2px); background-image: var(--v), var(--h); background-size: 1px 2px, 11px 1px; background-position: 29px 0, 29px 8px; background-repeat: repeat-y, no-repeat; }
.lab { width: 69px; height: 16px; display: flex; align-items: center; padding-left: 5px; font: 11px/16px "Liberation Mono", monospace; letter-spacing: -.6px; }
.gear { width: 12px; height: 12px; flex: none; margin-right: 7px; }
.picked { background: #3169c0; color: #0a1020; }
.right { flex: 1; min-width: 0; margin-left: 5px; background: #fff; display: flex; flex-direction: column; }
.tabrow { height: 22px; flex: none; padding-top: 1px; border-bottom: 1px solid #ccc; }
.tab-attr { width: 59px; height: 21px; margin-left: 2px; padding-left: 4px; border: solid #ccc; border-width: 1px 1px 0 0; background: #fff; line-height: 20px; font-size: 12px; }
.right-body { flex: 1; display: flex; min-height: 0; padding-top: 4px; }
.grid { width: 981px; flex: none; display: grid; grid-template-columns: 22px 191px 124px; grid-template-rows: 23px repeat(11, 19px); align-content: start; margin-left: 2px; border-top: 1px solid #bbb; }
.grid > div { border: solid #b8b8b8; border-width: 0 1px 1px 0; height: 100%; display: flex; align-items: center; white-space: nowrap; padding-top: 2px; }
.c-no { justify-content: center; background: #f4f4f4; font: 11px/16px "Liberation Mono", monospace; border-left: 1px solid #b8b8b8 !important; }
.c-name { padding-left: 21px; }
.c-val { padding-left: 3px; }
.hd { background: linear-gradient(#fbfbfb, #e6e6e6); justify-content: center; padding-left: 0; }
.hv { background: linear-gradient(#fce6bc, #edb65e); color: #80004c; justify-content: center; }
.blue { color: #0000e0; }
.gray { color: #8a8a8a; }
.mono { font: 11px/16px "Liberation Mono", monospace; letter-spacing: -.6px; }
.grp { padding-left: 4px; }
.plus { width: 12px; height: 12px; border: 1px solid #999; margin-right: 5px; font: 12px/10px "Liberation Sans", sans-serif; color: #222; text-align: center; flex: none; }
.rscroll { width: 18px; flex: none; border-right: 1px solid #bbb; display: flex; align-items: flex-end; justify-content: center; }
.rscroll .dn-ch { margin-bottom: 11px; margin-right: 0; }

/* status */
.status { height: 22px; flex: none; padding-top: 1px; display: flex; gap: 3px; white-space: nowrap; background: #f4f4f4; }
.st { height: 20px; background: #f6f6f6; border: solid #dcdcdc; border-width: 1px; padding-left: 1px; line-height: 20px; }
.st0 { width: 148px; } .st1 { width: 78px; } .st2 { width: 97px; } .st3 { width: 47px; } .st4 { width: 913px; } .st5 { flex: 1; }

/* taskbar */
.taskbar { height: 40px; flex: none; display: flex; background: #04090e; color: #fff; white-space: nowrap; }
.start { width: 48px; flex: none; background: #000; display: flex; align-items: center; justify-content: center; }
.win { width: 16px; height: 16px; }
.tsearch { width: 344px; flex: none; background: #333; display: flex; align-items: center; padding-left: 9px; color: #8a8a8a; font-size: 14px; }
.ring { width: 20px; height: 20px; border: 2px solid #ddd; border-radius: 50%; flex: none; margin-right: 7px; }
.tmic { width: 14px; height: 22px; margin-left: auto; margin-right: 14px; flex: none; }
.ti { width: 50px; flex: none; display: flex; align-items: center; justify-content: center; }
.ti0 { width: 48px; }
.run { background: linear-gradient(#76b9ed, #76b9ed) center bottom / 40px 2px no-repeat; }
.act { background-color: #33383c; background-size: 47px 2px; }
.tv { width: 20px; height: 16px; }
.t20 { width: 20px; height: 20px; } .t22 { width: 22px; height: 22px; } .t24 { width: 24px; height: 24px; }
.e { font: bold 30px/30px "Liberation Sans", sans-serif; margin-top: -6px; position: relative; }
.e-w { color: #eee; }
.e-b { color: #0a78d7; }
.e-ie { color: #1e90e8; }
.e-w::after, .e-ie::after { content: ""; position: absolute; left: -3px; top: 14px; width: 24px; height: 11px; border: 2px solid #ddd; border-color: #ddd transparent; border-radius: 50%; transform: rotate(-32deg); }
.e-ie::after { border-color: #e8c020 transparent; }
.e-g { color: #f2f2f2; background: #62b82e; border-radius: 50%; width: 24px; height: 24px; line-height: 20px; font-size: 22px; text-align: center; margin-top: 0; }
.tray { flex: 1; display: flex; align-items: center; font-size: 12px; min-width: 0; }
.link { margin-left: 9px; color: #ddd; }
.cpu { margin-left: 18px; width: 50px; display: flex; flex-direction: column; align-items: center; gap: 3px; color: #ddd; }
.car { width: 14px; height: 8px; margin-left: 17px; flex: none; }
.tray .ic { flex: none; }
.kb { width: 22px; height: 16px; flex: none; }
.bigA { font: 20px/20px "Liberation Sans", sans-serif; flex: none; }
.sred { width: 15px; height: 18px; margin-left: 14px; background: #e8441c; border-radius: 3px; font: bold 14px/18px "Liberation Sans", sans-serif; text-align: center; flex: none; }
.clock { margin-left: 18px; width: 58px; flex: none; display: flex; flex-direction: column; align-items: center; gap: 2px; color: #eee; font-size: 13px; }
.nt { width: 18px; height: 18px; margin-left: 20px; flex: none; }

/* floating widget */
.widget { position: absolute; left: 778px; top: 12px; width: 124px; height: 40px; border-radius: 0 20px 20px 0; background: linear-gradient(#fafafa, #e8e8e8); box-shadow: 0 3px 6px rgba(0,0,0,.4); display: flex; align-items: center; }
.gball { width: 46px; height: 46px; flex: none; margin: 6px 0 0 -1px; border-radius: 50%; background: #3fbe52; border: 1px solid #e0e0e0; box-shadow: 0 3px 5px rgba(0,0,0,.45); color: #dff5e2; font-size: 15px; line-height: 34px; text-align: center; }
.net { margin-left: 7px; width: 42px; display: flex; flex-direction: column; align-items: flex-end; font-size: 10px; line-height: 14px; padding-top: 4px; color: #222; }
.netrow { display: flex; width: 42px; justify-content: space-between; }
.gdown { color: #2a9a40; font-weight: bold; }
.plusball { width: 17px; height: 17px; margin-left: 5px; margin-top: 2px; border-radius: 50%; background: #3a78d8; color: #fff; font: bold 14px/16px "Liberation Sans", sans-serif; text-align: center; position: relative; flex: none; }
.rdot { position: absolute; right: -2px; top: -2px; width: 6px; height: 6px; border-radius: 50%; background: #e03030; }

/* IME */
.ime { position: absolute; left: 703px; top: 3px; width: 205px; height: 24px; background: #fbfcfe; border: 1px solid #c4d0dc; display: flex; align-items: center; }
.slogo { width: 22px; height: 25px; margin: 0 0 0 -1px; background: #e8481c; border-radius: 4px; color: #fff; font: italic bold 22px/24px "Liberation Sans", sans-serif; text-align: center; flex: none; }
.ia { margin-left: 10px; font: 18px/20px "Liberation Sans", sans-serif; color: #1a78d0; flex: none; }
.ipunct { margin-left: 9px; width: 10px; font: bold 11px/12px "Liberation Sans", sans-serif; color: #1a78d0; flex: none; }
.smi { margin-left: 10px; }
.i16 { width: 16px; height: 16px; flex: none; }

/* dialog */
.dialog { position: absolute; left: 660px; top: 133px; width: 683px; height: 570px; border: 1px solid #333; border-bottom-color: #1a6a78; border-width: 1px 1px 2px 1px; background: #bcd2ea; display: flex; flex-direction: column; }
.dlg-title { height: 29px; flex: none; background: linear-gradient(#9ab6d4, #c2d8ee); padding: 10px 0 0 6px; line-height: 16px; }
.dlg-tabs { height: 21px; flex: none; display: flex; align-items: flex-end; padding-left: 8px; background: #c2d8ee; }
.dt { text-align: center; border: 1px solid #ddd; border-bottom: 0; line-height: 18px; }
.dt-a { width: 40px; height: 19px; background: #ececec; }
.dt-b { width: 45px; height: 21px; background: #fff; }
.dlg-panel { margin-left: 6px; width: 668px; height: 485px; flex: none; background: #f0f0f0; border: 1px solid #fff; padding: 2px 3px 0 3px; display: flex; flex-direction: column; }
.d-row1 { height: 30px; flex: none; background: #f4f4f4; }
.d-row1 .sp, .d-row2 .sp { height: 20px; }
.d-combo { width: 77px; height: 24px; background: #fff; display: flex; align-items: center; padding: 0 3px 0 2px; justify-content: space-between; font-size: 13px; }
.bluebtn { border: 1px solid #1a88e0; display: flex; align-items: center; background: #e2eefa; flex: none; height: 23px; }
.bsel { width: 51px; padding-left: 2px; }
.d-row2 { height: 27px; width: 319px; flex: none; background: #f8f8f8; }
.bstr { width: 34px; justify-content: center; height: 22px; }
.canvas { width: 660px; height: 395px; flex: none; margin-left: 1px; border: 2px solid #f00; background: #141821; }
.draw { display: block; width: 656px; height: 391px; }
.dk path { fill: none; stroke: #3c424c; }
.lead { stroke: #777; fill: none; stroke-dasharray: 3 2; }
.gn path { fill: none; stroke: #7ec464; }
.lt { stroke: #c4d8f0; stroke-dasharray: 4 3; fill: none; }
.wh { stroke: #fff; fill: none; }
.outline { fill: none; stroke: #f2f2f2; stroke-width: 2; }
.bar { fill: none; stroke: #cb1a20; stroke-width: 4; }
.dots circle { fill: #141821; stroke: #f0d020; stroke-width: 1.200; }
.draw text { font-family: "Noto Sans", "Noto Sans CJK SC", sans-serif; }
.t-w { font-size: 11px; letter-spacing: -.4px; fill: #f0f0f0; }
.t-dk { font-size: 12px; fill: #3f4550; }
.t-gn { font-size: 11px; letter-spacing: -.4px; fill: #1fbf1f; }
.t-350 { font-size: 7px; font-weight: bold; fill: #18e018; }
.t-big { font-size: 20px; fill: #a8a8a8; }
.t-bg { fill: #10e010; }
.d-bottom { height: 27px; width: 233px; flex: none; margin: 1px 0 0 0; background: #f8f8f8; padding-left: 2px; }
.b-or { width: 51px; padding-left: 2px; }
.b-dy { width: 75px; padding-left: 3px; border-left: 0; }
.dlg-status { margin: 3px 0 0 7px; display: flex; gap: 3px; height: 23px; flex: none; }
.ds { background: #f6f6f6; border: 1px solid #e0e0e0; line-height: 21px; white-space: nowrap; }
.ds1 { width: 96px; overflow: hidden; letter-spacing: -.45px; padding-left: 1px; }
.ds2 { width: 568px; padding-left: 1px; display: flex; }
.grip { width: 8px; height: 8px; margin: 12px 2px 0 auto; background: repeating-linear-gradient(135deg, #aaa 0 1px, transparent 1px 3px); }
.az1 { fill: #2a50b0; } .az2 { fill: #b02020; }

/* text inside small icons */
.svgmini { font: 7px "Liberation Sans", sans-serif; fill: #555; }
.svgA { font: bold 10px "Liberation Serif", serif; fill: #1f50b0; }
.svgaz { font: bold 8px "Liberation Sans", sans-serif; }
.svgdyn { font: bold 6px "Liberation Sans", sans-serif; fill: #222; }
```
